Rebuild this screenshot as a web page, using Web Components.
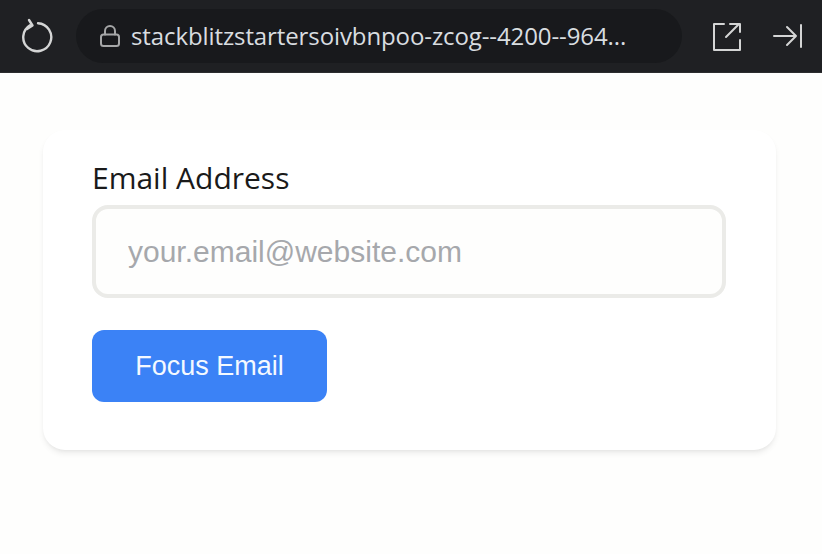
<!DOCTYPE html>
<html lang="en"><head><meta charset="utf-8"><title>Focus Email</title>
<style>html,body{margin:0;padding:0;background:#fefefd;height:100%;overflow:hidden}</style>
</head><body>
<preview-shell>
  <browser-bar url="stackblitzstartersoivbnpoo-zcog--4200--964..."></browser-bar>
  <form-card>
    <email-field label="Email Address" placeholder="your.email@website.com"></email-field>
    <focus-button>Focus Email</focus-button>
  </form-card>
</preview-shell>
<script>
function def(name, css, html, init){
  customElements.define(name, class extends HTMLElement{
    constructor(){super();this.attachShadow({mode:'open'});}
    connectedCallback(){
      const a=n=>this.getAttribute(n)||'';
      this.shadowRoot.innerHTML='<style>'+css+'</style>'+html(a);
    }
  });
}
def('preview-shell',`:host{display:flex;flex-direction:column;width:822px;height:554px;background:#fefefd}
 main{flex:1;padding:57px 46px 0 43px}`,()=>`<slot name="none"></slot><slot id="s"></slot>`);
def('browser-bar',`:host{display:flex;align-items:center;height:73px;box-sizing:border-box;background:#1f2023;border-bottom:1px solid #2c2d2f;padding:0 12px 0 19px;margin-bottom:57px;color:#d6d8da}
 svg{display:block;fill:none;stroke:#d4d5d5;stroke-linecap:round;stroke-linejoin:round}
 .pill{display:flex;align-items:center;width:606px;height:54px;box-sizing:border-box;margin-left:23px;margin-right:30px;padding-left:23px;border-radius:27px;background:#18191c}
 .url{margin-left:10px;font:24px/1 "Open Sans","Noto Sans",sans-serif;white-space:nowrap;letter-spacing:-.1px;color:#d9dde0}
 .gap{width:31px;flex:none}`,a=>`
 <svg width="34" height="36" viewBox="0 0 34 36" stroke-width="2.4"><path d="M11 7.2A14 14 0 1 0 19 5.2"/><path d="M10 2l3.5 5.5L8 11"/></svg>
 <div class="pill">
  <svg width="22" height="24" viewBox="0 0 22 24" stroke="#a6a7a8" stroke-width="2" style="stroke:#a6a7a8"><rect x="2" y="10.5" width="18" height="11.5" rx="2.5"/><path d="M6 10.5V7a5 5 0 0 1 10 0v3.5"/></svg>
  <span class="url">${a('url')}</span>
 </div>
 <svg width="30" height="30" viewBox="0 0 30 30" stroke-width="2"><path d="M12 3H2v26h26V19"/><path d="M14 16 28 2M18 2h10v10" stroke-width="0"/><path d="M14 16 27 3M18 3h10v8"/></svg>
 <div class="gap"></div>
 <svg width="30" height="26" viewBox="0 0 30 26" stroke-width="2"><path d="M1 13h22M14 4l9 9-9 9M28 2v22"/></svg>`);
def('form-card',`:host{display:flex;flex-direction:column;align-items:flex-start;box-sizing:border-box;width:733px;height:320px;margin-left:43px;padding:30px 50px 48px 49px;background:#fff;border-radius:22px;box-shadow:0 4px 6px -1px rgba(0,0,0,.08),0 2px 4px -2px rgba(0,0,0,.06)}`,()=>`<slot></slot>`);
def('email-field',`:host{display:block;width:634px;margin-bottom:32px}
 label{display:block;font:30px/36px "Open Sans","Noto Sans",sans-serif;color:#1a1a1a;margin-bottom:9px}
 input{display:block;box-sizing:border-box;width:100%;height:93px;padding:0 32px;border:4px solid #ebebe8;border-radius:16px;outline:0;background:#fefefd;font:30px "Liberation Sans",Arial,sans-serif}
 input::placeholder{color:#a6a8ac;opacity:1}`,a=>`<label for="e">${a('label')}</label><input id="e" type="email" placeholder="${a('placeholder')}">`);
def('focus-button',`:host{display:block}
 button{display:block;width:235px;height:72px;border:0;border-radius:12px;background:#3b82f6;color:#f4f9ff;font:27px "Liberation Sans",Arial,sans-serif;padding:0}`,()=>`<button type="button"><slot></slot></button>`);
</script>
</body></html>
